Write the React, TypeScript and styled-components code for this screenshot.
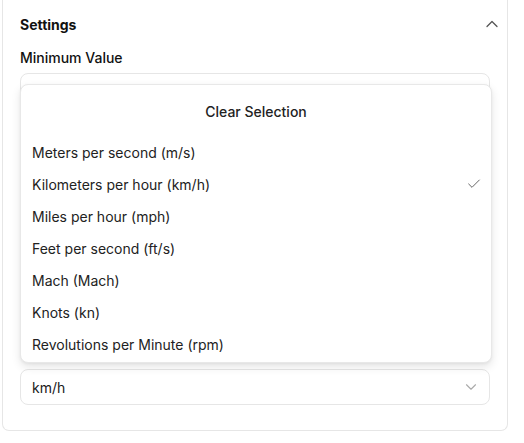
import React from "react";
import styled, { createGlobalStyle } from "styled-components";
import { ChevronUp, ChevronDown, Check } from "lucide-react";

const Global = createGlobalStyle`
  html, body { margin: 0; padding: 0; background: #ffffff; }
  body { font-family: Inter, "Noto Sans", sans-serif; color: #1a1a1a; }
  * { box-sizing: border-box; }
`;

const Page = styled.div`
  padding: 0 16px 0 2px;
`;

const Card = styled.section`
  position: relative;
  width: 506px;
  border: 1px solid #e6e6e6;
  border-top: none;
  border-radius: 0 0 7px 7px;
  padding: 0 17px 25px 17px;
`;

const Header = styled.div`
  height: 48px;
  display: flex;
  align-items: center;
  justify-content: space-between;
  margin-right: -12px;
`;

const Title = styled.h2`
  margin: 0;
  font-size: 14px;
  font-weight: 700;
  color: #111;
`;

const IconWrap = styled.span<{ $color: string }>`
  display: inline-flex;
  color: ${(p) => p.$color};
`;

const Fields = styled.div`
  display: flex;
  flex-direction: column;
  gap: 13px;
`;

const Field = styled.div`
  display: flex;
  flex-direction: column;
  gap: 5px;
`;

const InputStack = styled.div`
  display: flex;
  flex-direction: column;
  gap: 13.5px;
`;

const Label = styled.label`
  font-size: 14px;
  line-height: 20px;
  font-weight: 500;
  color: #111;
`;

const Input = styled.div`
  height: 36px;
  border: 1px solid #e6e6e6;
  border-radius: 8px;
  padding: 0 11px;
  display: flex;
  align-items: center;
  font-size: 14px;
`;

const Select = styled(Input)`
  justify-content: space-between;
  padding-right: 9px;
  color: #1a1a1a;
`;

const Popover = styled.div`
  position: absolute;
  top: 84px;
  left: 17px;
  width: 472px;
  height: 279px;
  background: #fff;
  border: 1px solid #e8e8e8;
  border-radius: 8px;
  box-shadow: 0 4px 10px rgba(0, 0, 0, 0.1), 0 1px 3px rgba(0, 0, 0, 0.05);
  padding: 4px 3px 2px;
  display: flex;
  flex-direction: column;
`;

const ClearRow = styled.div`
  height: 44px;
  margin-bottom: 3px;
  display: flex;
  align-items: center;
  justify-content: center;
  font-size: 14px;
  font-weight: 500;
  color: #222;
`;

const Item = styled.div`
  height: 32px;
  display: flex;
  align-items: center;
  justify-content: space-between;
  padding: 0 6px 0 8px;
  font-size: 14px;
  color: #222;
`;

const units = [
  "Meters per second (m/s)",
  "Kilometers per hour (km/h)",
  "Miles per hour (mph)",
  "Feet per second (ft/s)",
  "Mach (Mach)",
  "Knots (kn)",
  "Revolutions per Minute (rpm)",
];

export default function App() {
  return (
    <Page>
      <Global />
      <Card>
        <Header>
          <Title>Settings</Title>
          <IconWrap $color="#555">
            <ChevronUp size={20} strokeWidth={1.5} />
          </IconWrap>
        </Header>
        <Fields>
          <Field>
            <Label>Minimum Value</Label>
            <Input />
          </Field>
          <InputStack>
            <Input />
            <Input />
            <Input />
            <Input />
            <Input />
          </InputStack>
          <Select>
            <span>km/h</span>
            <IconWrap $color="#aaa">
              <ChevronDown size={18} strokeWidth={1.5} />
            </IconWrap>
          </Select>
        </Fields>
        <Popover>
          <ClearRow>Clear Selection</ClearRow>
          {units.map((u) => (
            <Item key={u}>
              <span>{u}</span>
              {u.includes("km/h") && (
                <IconWrap $color="#666">
                  <Check size={16} strokeWidth={1.5} />
                </IconWrap>
              )}
            </Item>
          ))}
        </Popover>
      </Card>
    </Page>
  );
}
